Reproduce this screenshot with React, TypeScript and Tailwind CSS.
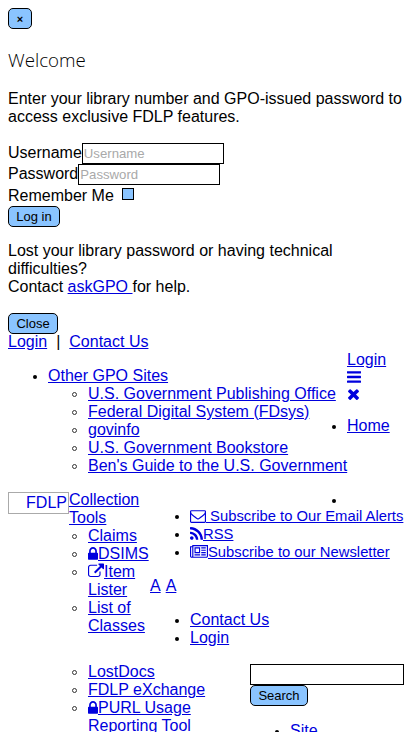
import React from "react";

const glyphs = {
  lock: { box: "320 128 1152 1536", w: "w-[10px]", d: "M640 768h512v-192q0-106-75-181t-181-75-181 75-75 181v192zm832 96v576q0 40-28 68t-68 28h-960q-40 0-68-28t-28-68v-576q0-40 28-68t68-28h32v-192q0-184 132-316t316-132 316 132 132 316v192h32q40 0 68 28t28 68z" },
  bars: { box: "128 128 1536 1536", w: "w-[14px]", d: "M1664 1344v128q0 26-19 45t-45 19h-1408q-26 0-45-19t-19-45v-128q0-26 19-45t45-19h1408q26 0 45 19t19 45zm0-512v128q0 26-19 45t-45 19h-1408q-26 0-45-19t-19-45v-128q0-26 19-45t45-19h1408q26 0 45 19t19 45zm0-512v128q0 26-19 45t-45 19h-1408q-26 0-45-19t-19-45v-128q0-26 19-45t45-19h1408q26 0 45 19t19 45z" },
  times: { box: "192 128 1408 1536", w: "w-[13px]", d: "M1490 1322q0 40-28 68l-136 136q-28 28-68 28t-68-28l-294-294-294 294q-28 28-68 28t-68-28l-136-136q-28-28-28-68t28-68l294-294-294-294q-28-28-28-68t28-68l136-136q28-28 68-28t68 28l294 294 294-294q28-28 68-28t68 28l136 136q28 28 28 68t-28 68l-294 294 294 294q28 28 28 68z" },
  external: { box: "0 -64 1792 1600", w: "w-[16px]", d: "M1408 928v320q0 119-84.5 203.5t-203.5 84.5h-832q-119 0-203.5-84.5t-84.5-203.5v-832q0-119 84.5-203.5t203.5-84.5h704q14 0 23 9t9 23v64q0 14-9 23t-23 9h-704q-66 0-113 47t-47 113v832q0 66 47 113t113 47h832q66 0 113-47t47-113v-320q0-14 9-23t23-9h64q14 0 23 9t9 23zm384-864v512q0 26-19 45t-45 19-45-19l-176-176-652 652q-10 10-23 10t-23-10l-114-114q-10-10-10-23t10-23l652-652-176-176q-19-19-19-45t19-45 45-19h512q26 0 45 19t19 45z" },
  rss: { box: "192 128 1408 1536", w: "w-[13px]", d: "M576 1344q0 80-56 136t-136 56-136-56-56-136 56-136 136-56 136 56 56 136zm512 123q2 28-17 48-18 21-47 21h-135q-25 0-43-16.5t-20-41.5q-22-229-184.5-391.5t-391.5-184.5q-25-2-41.5-20t-16.5-43v-135q0-29 21-47 17-17 43-17h5q160 13 306 80.5t259 181.500q114 113 181.500 259t80.500 306zm512 2q2 27-18 47-18 20-46 20h-143q-26 0-44.500-17.500t-19.500-42.500q-12-215-101-408.500t-231.500-336-336-231.500-408.500-102q-25-1-42.500-19.500t-17.500-43.500v-143q0-28 20-46 18-18 44-18h3q262 13 501.500 120t425.500 294q187 186 294 425.500t120 501.500z" },
  envelope: { box: "0 128 1792 1536", w: "w-[16px]", d: "M1664 1504v-768q-32 36-69 66-268 206-426 338-51 43-83 67t-86.500 48.500-102.500 24.500h-2q-48 0-102.500-24.500t-86.500-48.500-83-67q-158-132-426-338-37-30-69-66v768q0 13 9.500 22.500t22.500 9.500h1472q13 0 22.500-9.500t9.500-22.500zm0-1051v-24.500l-.5-13-3-12.500-5.500-9-9-7.500-14-2.500h-1472q-13 0-22.500 9.500t-9.500 22.500q0 168 147 284 193 152 401 317 6 5 35 29.500t46 37.500 44.500 31.500 50.500 27.500 43 9h2q20 0 43-9t50.500-27.500 44.500-31.500 46-37.500 35-29.500q208-165 401-317 54-43 100.500-115.500t46.500-131.500zm128-37v1088q0 66-47 113t-113 47h-1472q-66 0-113-47t-47-113v-1088q0-66 47-113t113-47h1472q66 0 113 47t47 113z" },
  news: { box: "0 128 2048 1536", w: "w-[18px]", d: "M1024 512h-384v384h384zm128 640v128h-640v-128zm0-768v640h-640v-640zm640 768v128h-512v-128zm0-256v128h-512v-128zm0-256v128h-512v-128zm0-256v128h-512v-128zm-1536 960v-960h-128v960q0 26 19 45t45 19 45-19 19-45zm1664 0v-1088h-1536v1088q0 33-11 64h1483q26 0 45-19t19-45zm128-1216v1216q0 80-56 136t-136 56h-1664q-80 0-136-56t-56-136v-1088h256v-128z" },
} as const;

function Icon({ name }: { name: keyof typeof glyphs }) {
  const g = glyphs[name];
  return (
    <svg viewBox={g.box} preserveAspectRatio="none" className={`${g.w} inline-block h-[14px] shrink-0 align-[-2px]`} fill="currentColor" fillRule={name === "news" ? "evenodd" : "nonzero"}>
      <path d={g.d} />
    </svg>
  );
}

function A({ children }: { children?: React.ReactNode }) {
  return <a href="#" className="text-[#0000dd] underline">{children}</a>;
}

function Item({ children, hollow = false }: { children?: React.ReactNode; hollow?: boolean }) {
  return (
    <li className="flex min-h-[18px]">
      <span className={hollow ? "-ml-4 mt-[7px] mr-[11px] size-[5px] shrink-0 rounded-full border border-[#333]" : "-ml-[15px] mt-[8px] mr-[11px] size-1 shrink-0 rounded-full bg-black"} />
      <div className="whitespace-nowrap">{children}</div>
    </li>
  );
}

const button = "block h-[21px] rounded-[5px] border border-black bg-[#8ac4ff] text-center text-[13px] leading-[19px] text-black";

export default function App() {
  return (
    <main className="h-[732px] w-[412px] overflow-hidden bg-white p-2 font-['Liberation_Sans',Arial,sans-serif] text-base leading-[18px] text-black">
      <section className="h-[325px]">
        <button className={`${button} w-6`}><span className="text-[11px] font-bold">×</span></button>
        <h3 className="mt-[19px] h-6 font-['Open_Sans'] text-[18.7px] leading-6 font-light">Welcome</h3>
        <p className="mt-[18px]">Enter your library number and GPO-issued password to access exclusive FDLP features.</p>
        <form className="mt-[17px]">
          <label className="flex h-[21px] leading-[20px]">Username<input placeholder="Username" className="h-[21px] w-[142px] border border-black px-px text-[13.2px] placeholder:text-[#a9a9a9]" /></label>
          <label className="flex h-[21px] leading-[20px]">Password<input placeholder="Password" className="h-[21px] w-[142px] border border-black px-px text-[13.2px] placeholder:text-[#a9a9a9]" /></label>
          <label className="flex h-[21px] leading-[21px]">Remember Me<span className="mt-[3px] ml-2 size-3 border border-black bg-[#8ac4ff]" /></label>
          <button className={`${button} w-[52px]`}>Log in</button>
        </form>
        <p className="mt-[15px]">Lost your library password or having technical difficulties?<br />Contact <A>askGPO </A>for help.</p>
        <button className={`${button} mt-[17px] w-[50px]`}>Close</button>
      </section>
      <div className="flex"><A>Login</A><span className="mx-[9px]">|</span><A>Contact Us</A></div>

      <section className="flex h-[140px]">
        <ul className="w-[339px] pt-4 pl-10">
          <Item><A>Other GPO Sites</A></Item>
          <ul className="pl-10">
            {["U.S. Government Publishing Office", "Federal Digital System (FDsys)", "govinfo", "U.S. Government Bookstore", "Ben's Guide to the U.S. Government"].map((s) => <Item hollow key={s}><A>{s}</A></Item>)}
          </ul>
        </ul>
        <div>
          <A>Login</A>
          <div className="h-4 leading-4 text-[#0000dd]"><Icon name="bars" /></div>
          <div className="h-4 pt-px leading-4 text-[#0000dd]"><Icon name="times" /></div>
          <ul className="mt-4"><Item><A>Home</A></Item></ul>
        </div>
      </section>

      <section className="flex">
        <div className="mt-px h-[22px] w-[61px] shrink-0 border border-[#aaa] pr-px text-right leading-[19px] text-[#0000dd]">FDLP</div>
        <div className="w-[81px] shrink-0">
          <A>Collection<br />Tools</A>
          <ul className="pl-[19px]">
            <Item hollow><A>Claims</A></Item>
            <Item hollow><span className="flex items-center text-[#0000dd]"><Icon name="lock" /><A>DSIMS</A></span></Item>
            <Item hollow><span className="flex text-[#0000dd]"><Icon name="external" /><A>Item</A></span><A>Lister</A></Item>
            <Item hollow><A>List of<br />Classes</A></Item>
            <div className="h-7" />
            <Item hollow><A>LostDocs</A></Item>
            <Item hollow><A>FDLP eXchange</A></Item>
            <Item hollow><span className="flex items-center text-[#0000dd]"><Icon name="lock" /><A>PURL Usage</A></span><A>Reporting Tool</A></Item>
          </ul>
        </div>
        <div className="min-w-0 flex-1">
          <ul className="h-4 pl-[197px]"><Item /></ul>
          <ul className="pl-10 text-[14.8px]">
            <Item><A><Icon name="envelope" /> Subscribe to Our Email Alerts</A></Item>
            <Item><A><Icon name="rss" />RSS</A></Item>
            <Item><A><Icon name="news" />Subscribe to our Newsletter</A></Item>
          </ul>
          <div className="mt-4 flex gap-[5px]"><A>A</A><A>A</A></div>
          <ul className="mt-4 pl-10"><Item><A>Contact Us</A></Item><Item><A>Login</A></Item></ul>
          <form className="mt-[17px] ml-[100px]">
            <input className="block h-[21px] w-[154px] border border-black" />
            <button className={`${button} w-[58px]`}>Search</button>
          </form>
          <ul className="mt-4 pl-[140px]"><Item><A>Site</A></Item></ul>
        </div>
      </section>
    </main>
  );
}
